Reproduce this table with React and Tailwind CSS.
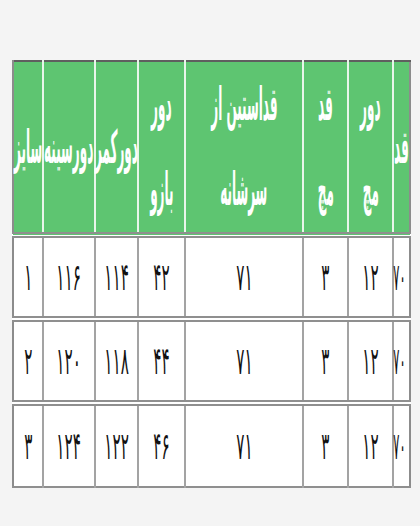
import React from "react";

const widths = [17, 45, 45, 118, 47, 43, 52, 30];

const headers = [
  ["قد"],
  ["دور", "مچ"],
  ["قد", "مچ"],
  ["قداستین از", "سرشانه"],
  ["دور", "بازو"],
  ["دورکمر"],
  ["دورسینه"],
  ["سایز"],
];

const rows = [
  ["۷۰", "۱۲", "۳", "۷۱", "۴۲", "۱۱۴", "۱۱۶", "۱"],
  ["۷۰", "۱۲", "۳", "۷۱", "۴۴", "۱۱۸", "۱۲۰", "۲"],
  ["۷۰", "۱۲", "۳", "۷۱", "۴۶", "۱۲۲", "۱۲۴", "۳"],
];

const App = () => {
  return (
    <div
      className="min-h-screen bg-[#f4f4f4] pt-[60px] pl-[12px]"
      style={{ fontFamily: '"DejaVu Sans", "Noto Sans", sans-serif' }}
    >
      <table
        dir="rtl"
        className="table-fixed border-collapse w-[397px] bg-white border-2 border-[#8c8c8c] border-t-[#5f5f5f]"
      >
        <colgroup>
          {widths.map((w, i) => (
            <col key={i} style={{ width: w }} />
          ))}
        </colgroup>
        <thead>
          <tr className="h-[157px] border-b-[6px] border-double border-b-[#8f8f8f]">
            {headers.map((lines, i) => (
              <th
                key={i}
                className="bg-[#5ec571] text-white font-bold text-[46px] leading-[85px] p-0 border-l-2 border-l-[#e9f5ea] last:border-l-0 whitespace-nowrap"
              >
                {lines.map((l, j) => (
                  <div key={j} className="flex justify-center">
                    <span className="shrink-0 scale-x-[0.26]">{l}</span>
                  </div>
                ))}
              </th>
            ))}
          </tr>
        </thead>
        <tbody>
          {rows.map((r, i) => (
            <tr
              key={i}
              className="h-[84px] border-b-[6px] border-double border-b-[#8f8f8f] last:border-b-2 last:border-solid"
            >
              {r.map((v, j) => (
                <td
                  key={j}
                  className="p-0 text-[#111] text-[38px] tracking-[-0.14em] border-l-2 border-l-[#a3a3a3] last:border-l-0 whitespace-nowrap"
                >
                  <div className="flex justify-center">
                    <span
                      className={
                        j === 0
                          ? "shrink-0 scale-x-[0.3] -translate-x-[2px]"
                          : "shrink-0 scale-x-[0.4]"
                      }
                    >
                      {v}
                    </span>
                  </div>
                </td>
              ))}
            </tr>
          ))}
        </tbody>
      </table>
    </div>
  );
};

export default App;
